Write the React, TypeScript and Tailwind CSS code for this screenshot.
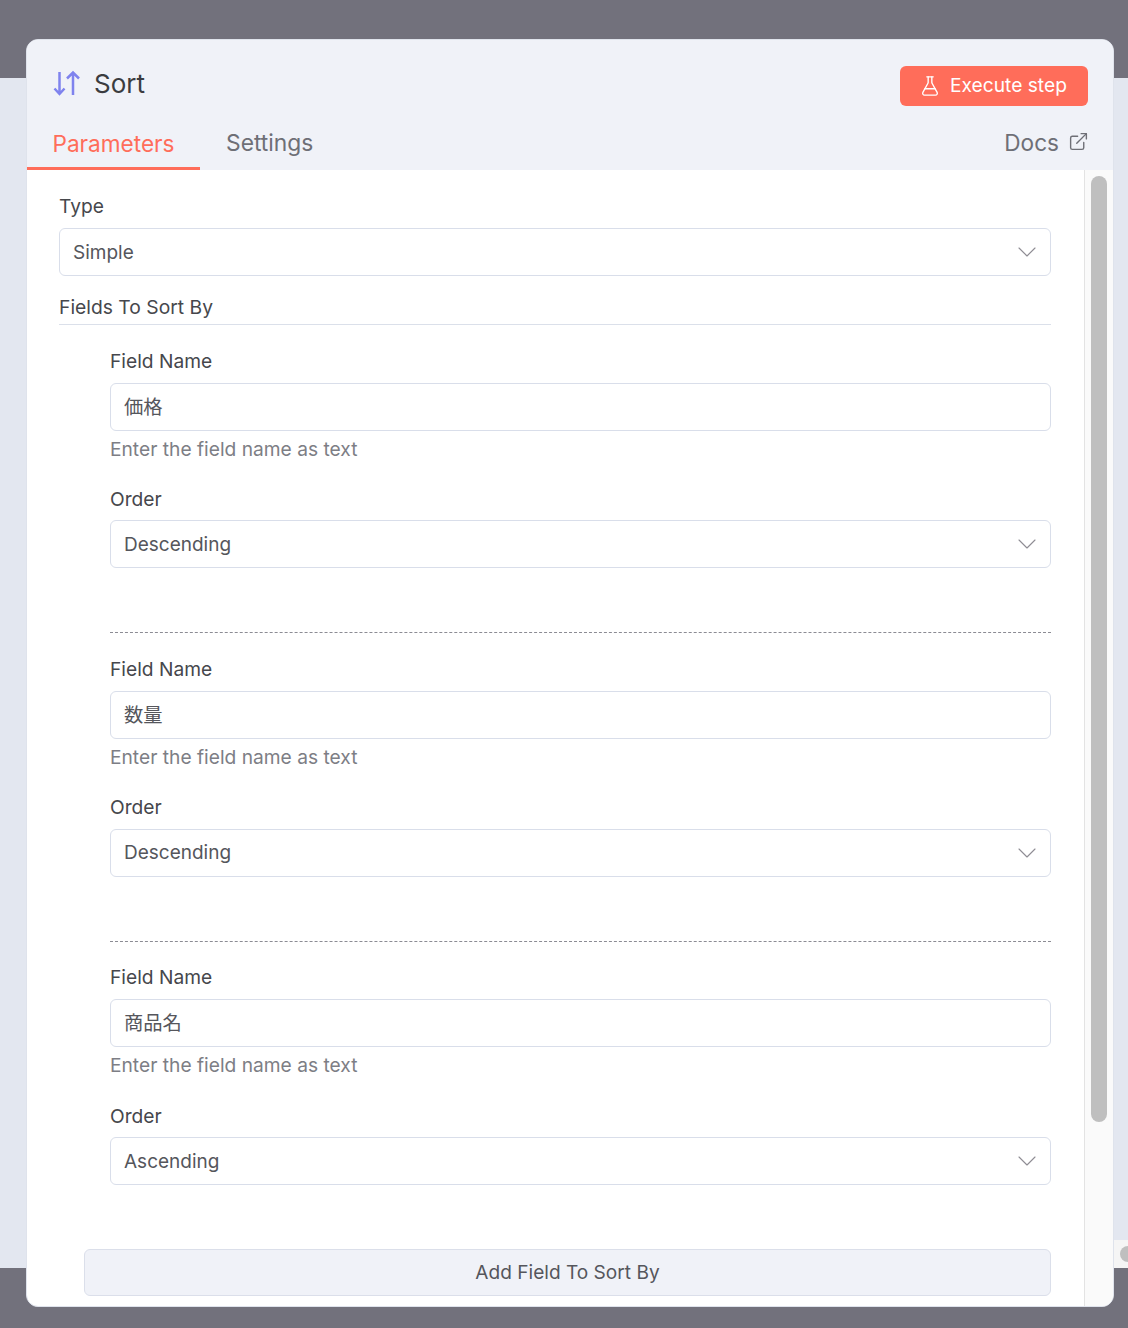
import { ChevronDown, ExternalLink, FlaskConical } from "lucide-react"

const FONT = "font-['Inter','Noto_Sans_CJK_JP',sans-serif]"

function Label({ children }: { children: string }) {
  return <div className="h-[24px] text-[19.2px] leading-[24px] text-[#46474c]">{children}</div>
}

function SelectBox({ value }: { value: string }) {
  return (
    <div className="flex h-[48px] items-center justify-between rounded-[6px] border border-[#d9deea] bg-white pl-[13px] pr-[7px] text-[19px] text-[#55565c]">
      <span className="pt-[2px]">{value}</span>
      <ChevronDown className="h-[32px] w-[32px] text-[#8f8d94]" strokeWidth={0.85} />
    </div>
  )
}

function SortField({ name, order }: { name: string; order: string }) {
  return (
    <div>
      <Label>Field Name</Label>
      <div className="mt-[10px] flex h-[48px] items-center rounded-[6px] border border-[#d9deea] bg-white pl-[13px] text-[19.300px] text-[#55565c]">
        {name}
      </div>
      <div className="mt-[6px] h-[24px] text-[19.200px] leading-[24px] text-[#7d7e85]">Enter the field name as text</div>
      <div className="mt-[26.300px]">
        <Label>Order</Label>
      </div>
      <div className="mt-[9.150px]">
        <SelectBox value={order} />
      </div>
    </div>
  )
}

function SortIcon() {
  return (
    <svg width="28" height="28" viewBox="0 0 28 28" fill="none" stroke="#7f83ee" strokeWidth="2.5">
      <path d="M6.500 2v22M1.500 18.500l5 5.500 5-5.500" />
      <path d="M20 25V3M14 8.500l6-6 6 6" />
    </svg>
  )
}

export default function App() {
  return (
    <div className={`relative h-[1328px] w-[1128px] overflow-hidden bg-[#72717c] ${FONT}`}>
      {/* page behind the modal */}
      <div className="flex h-full flex-col">
        <div className="h-[78px]" />
        <div className="h-[1190px] bg-[#e3e7f0]" />
      </div>
      <div className="absolute right-0 top-[1240px] flex h-[28px] w-[15px] items-center justify-end bg-[#f5f5f5]">
        <div className="h-[16px] w-[8px] rounded-l-full bg-[#bfbfbf]" />
      </div>

      {/* modal */}
      <div className="absolute left-[26px] top-[39px] flex h-[1268px] w-[1088px] flex-col overflow-hidden rounded-[12px] border border-[#dfe3ec] bg-white">
        <div className="relative h-[130px] shrink-0 bg-[#f0f2f8]">
          <div className="flex items-start justify-between pl-[26px] pr-[25px]">
            <div className="flex h-[60px] items-center pt-[27px]">
              <SortIcon />
              <span className="ml-[13px] text-[26px] leading-[32px] text-[#3b3c40]">Sort</span>
            </div>
            <button className="mt-[26px] flex h-[40px] w-[188px] items-center gap-[9px] rounded-[6px] bg-[#ff6d5a] pl-[19px] text-[19.200px] text-white">
              <FlaskConical className="h-[22px] w-[22px]" strokeWidth={1.5} />
              <span className="mb-[2px]">Execute step</span>
            </button>
          </div>
          <div className="absolute bottom-0 left-0 right-0 flex h-[52px] items-end">
            <div className="flex h-full w-[173px] items-center justify-center border-b-[3px] border-[#ff6d5a] pt-[3px] text-[22.600px] text-[#ff6d5a]">
              Parameters
            </div>
            <div className="flex h-full items-center pb-[1px] pl-[26px] text-[22.800px] text-[#6e6f76]">Settings</div>
            <div className="ml-auto flex h-full items-center gap-[9px] pb-[2px] pr-[24px] text-[22.600px] text-[#6e6f76]">
              Docs
              <ExternalLink className="mb-[3px] h-[21px] w-[21px]" strokeWidth={1.6} />
            </div>
          </div>
        </div>

        <div className="flex min-h-0 flex-1">
          <div className="min-w-0 flex-1 overflow-hidden pl-[32px] pr-[33px] pt-[24px]">
            <Label>Type</Label>
            <div className="mt-[10px]">
              <SelectBox value="Simple" />
            </div>
            <div className="mt-[19px] h-[30px] border-b border-[#dbe0ea] text-[19.300px] leading-[24px] text-[#46474c]">
              Fields To Sort By
            </div>
            <div className="pl-[51px] pt-[24px]">
              <SortField name="価格" order="Descending" />
              <div className="mb-[23.750px] mt-[64px] border-t border-dashed border-[#8c8c94]" />
              <SortField name="数量" order="Descending" />
              <div className="mb-[23.750px] mt-[64px] border-t border-dashed border-[#8c8c94]" />
              <SortField name="商品名" order="Ascending" />
            </div>
            <div className="ml-[25px] mt-[64px] flex h-[47px] items-center justify-center rounded-[6px] border border-[#dbdfea] bg-[#f0f2f8] text-[19.100px] text-[#55565c]">
              Add Field To Sort By
            </div>
          </div>
          <div className="w-[29px] shrink-0 border-l border-[#e3e3e3] bg-[#fafafa] pl-[6px] pt-[6px]">
            <div className="h-[946px] w-[16px] rounded-full bg-[#bfbfbf]" />
          </div>
        </div>
      </div>
    </div>
  )
}
